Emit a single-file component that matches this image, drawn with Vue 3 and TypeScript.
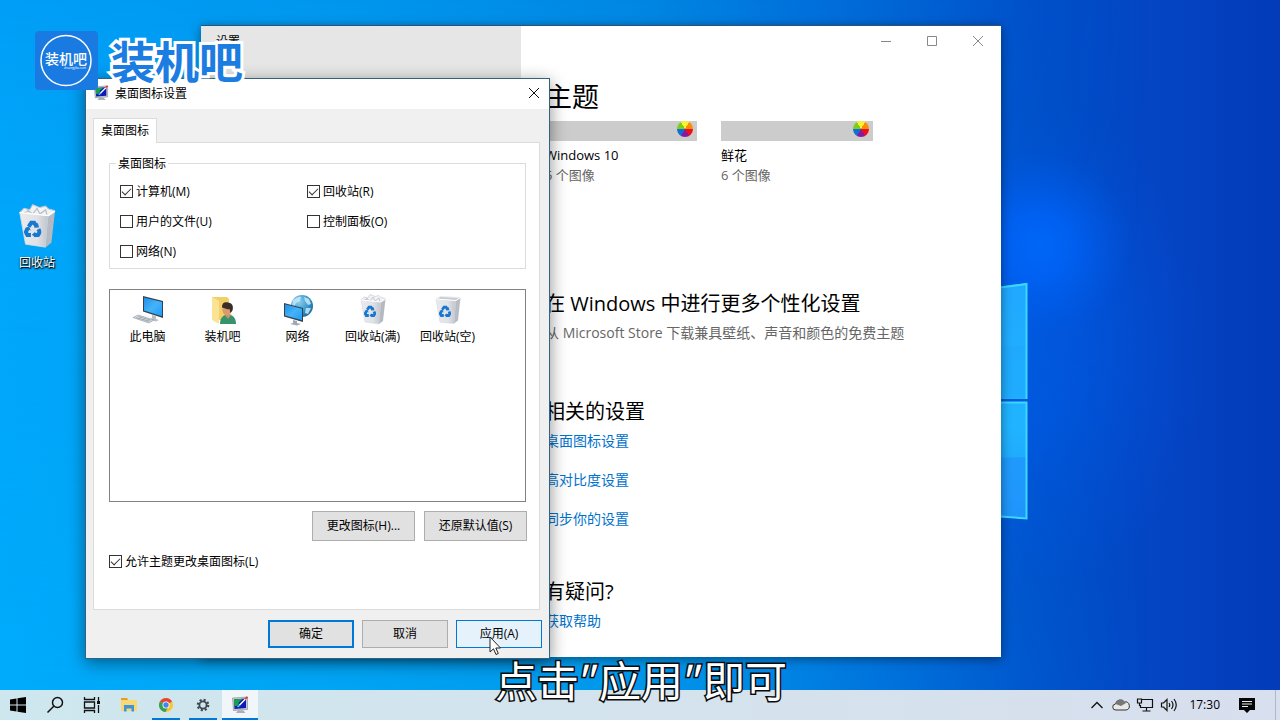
<script setup lang="ts">
import { ref } from 'vue'

interface Choice { label: string; checked: boolean }
interface DesktopIcon { label: string; kind: 'pc' | 'user' | 'net' | 'full' | 'empty' }

const choices = ref<Choice[]>([
  { label: '计算机(M)', checked: true },
  { label: '回收站(R)', checked: true },
  { label: '用户的文件(U)', checked: false },
  { label: '控制面板(O)', checked: false },
  { label: '网络(N)', checked: false },
])
const allowThemes = ref(true)

const icons: DesktopIcon[] = [
  { label: '此电脑', kind: 'pc' },
  { label: '装机吧', kind: 'user' },
  { label: '网络', kind: 'net' },
  { label: '回收站(满)', kind: 'full' },
  { label: '回收站(空)', kind: 'empty' },
]
const themes = [
  { name: 'Windows 10', count: '5 个图像' },
  { name: '鲜花', count: '6 个图像' },
]
const links = ['桌面图标设置', '高对比度设置', '同步你的设置']
</script>

<template>
  <div class="screen">
    <svg width="0" height="0" class="defs" aria-hidden="true">
      <defs>
        <linearGradient id="scr" x1="0" y1="0" x2="1" y2="1">
          <stop offset="0" stop-color="#1d8fe6" /><stop offset="0.5" stop-color="#45b3fb" /><stop offset="1" stop-color="#1f9bf2" />
        </linearGradient>
        <linearGradient id="bin" x1="0" y1="0" x2="1" y2="0">
          <stop offset="0" stop-color="#e9ebee" /><stop offset="0.6" stop-color="#dfe2e6" /><stop offset="1" stop-color="#c0c5cc" />
        </linearGradient>
        <radialGradient id="globe" cx="0.35" cy="0.3" r="0.8">
          <stop offset="0" stop-color="#8fd0f0" /><stop offset="0.6" stop-color="#3596cc" /><stop offset="1" stop-color="#17628f" />
        </radialGradient>
        <symbol id="recycle" viewBox="0 0 12 12">
          <g fill="none" stroke="#1878cf" stroke-width="2.8">
            <path d="M3.2 4.2 5 1.6h2l1.6 2.3" /><path d="M10 6l.9 2-1.2 2H7" /><path d="M4.8 10H2.3L1.2 8l1.3-2.4" />
          </g>
          <path d="M6.9 5.1 10.4 4.8 9.6 1.6zM7.8 7.8v4L5.4 9.9zM.6 5.4 3.4 4l1.3 3z" fill="#1878cf" />
        </symbol>
        <symbol id="bin-empty" viewBox="0 0 32 32">
          <path d="M4 5 8.500 2.500 28 3.500 24 7z" fill="#c9cdd2" stroke="#eceef0" />
          <path d="M4 5 24 6.500 22 29.500 8 28z" fill="url(#bin)" stroke="#d0d4d8" stroke-width="0.6" />
          <path d="M24 6.500 28.500 3.500 26 26.500 22 29.500z" fill="#b8bdc5" />
          <path d="M4 5l20 1.500 4.500-3" fill="none" stroke="#fff" />
          <use href="#recycle" x="7" y="11" width="12" height="13" />
        </symbol>
        <symbol id="bin-full" viewBox="0 0 32 32">
          <path d="M4 6 7 3l4 1 2-3.500 5 2 4-1 2 2 4 1-1 3-9 3z" fill="#f1f3f5" stroke="#c5cad0" stroke-width="0.7" />
          <path d="M9 4l4 3 3-4 2 4 4-3 1 4M7 6l4-1" fill="none" stroke="#b6bcc4" stroke-width="0.8" />
          <path d="M4 6 24 8 22 30 8 28z" fill="url(#bin)" stroke="#d5d9dd" stroke-width="0.6" />
          <path d="M24 8 28.500 5 26 27 22 30z" fill="#b5bac2" />
          <path d="M4 6l20 2 4.500-3" fill="none" stroke="#fff" />
          <use href="#recycle" x="7" y="11" width="12" height="13" />
        </symbol>
        <symbol id="pc" viewBox="0 0 32 32">
          <path d="M11 2 31 7v17L11 17.500z" fill="#33404c" />
          <path d="M12 3.500 30 8v14.200L12 16.500z" fill="url(#scr)" />
          <path d="M20 21v3l-3 1.500 7 2 3-1.500-3-1v-3z" fill="#b9c0c6" />
          <path d="M1 23.500 6 21l16 5-5 3z" fill="#d5dade" stroke="#8d969e" stroke-width="0.6" />
          <path d="M4 23.500l13 4M6 22.300l13 4.200M6 25l4-2M10 26.200l4-2M14 27.400l4-2" stroke="#98a1aa" stroke-width="0.7" />
        </symbol>
        <symbol id="user" viewBox="0 0 32 32">
          <path d="M5 3h15l2 2v21H5z" fill="#f3cf68" /><path d="M5 3l7 4v23l-7-4z" fill="#fbe396" />
          <path d="M13 30c0-7 4-9.500 8-9.500s8 2.500 8 9.500z" fill="#36936b" />
          <path d="M17.500 20.500 21 25l3.500-4.500z" fill="#cf8f5e" />
          <ellipse cx="20" cy="15.500" rx="4.600" ry="6" fill="#d99b6b" />
          <path d="M15 13.500c0-5 3-5.500 6-5 3.500.3 6 3 4.500 8l-2 2.500-1-4c-3 1-4-1-7.500-1.500z" fill="#3b2e28" />
        </symbol>
        <symbol id="net" viewBox="0 0 32 32">
          <circle cx="20" cy="12" r="11" fill="url(#globe)" />
          <path d="M11 6c3-1 4-4 8-3l-1 4-4 2-2 4-2-1zM22 3l5 2 2 5-3 1-3-4zM24 14l5 0-3 6-3-1z" fill="#c8e7f3" opacity="0.85" />
          <path d="M2 9 21 14v14L2 22.500z" fill="#33404c" /><path d="M3 10.300 20 14.800v11.500L3 21.500z" fill="url(#scr)" />
          <path d="M11 26v3l-3 1 7 1.500 4-1.500-4-1v-2z" fill="#9fa9b2" />
        </symbol>
        <symbol id="personal" viewBox="0 0 18 18">
          <path d="M1.500 2 16.500 1v12.500L2.500 14.500z" fill="#c4cac8" stroke="#778" stroke-width="0.5" /><path d="M3 3.500 15 2.500v9.500L3.500 13z" fill="#1018b8" />
          <path d="M3 3.500 12 2.700 8 6 7 9.500 3.300 10.500z" fill="#17a34a" /><path d="M8 9.500 15.500 2" stroke="#fff" stroke-width="1.400" /><path d="M6.500 11 9 9" stroke="#54c8f0" stroke-width="1.600" /><path d="M14 3l2.500-2" stroke="#e03a30" stroke-width="1.800" />
          <path d="M7 14.300h5l2.500 2.700H5z" fill="#a9b0b2" />
        </symbol>
      </defs>
    </svg>

    <main class="desktop">
      <svg class="wallpaper" viewBox="0 0 1280 690" preserveAspectRatio="xMaxYMid slice" aria-hidden="true">
        <defs>
          <linearGradient id="sky" x1="0" y1="0" x2="1" y2="0">
            <stop offset="0" stop-color="#00a7fb" /><stop offset="0.28" stop-color="#009df0" /><stop offset="0.5" stop-color="#008be3" />
            <stop offset="0.64" stop-color="#006fda" /><stop offset="0.8" stop-color="#0050ca" /><stop offset="0.9" stop-color="#0445c4" /><stop offset="1" stop-color="#033bb9" />
          </linearGradient>
          <linearGradient id="low" x1="0" y1="0" x2="0" y2="1">
            <stop offset="0" stop-color="#0070e0" stop-opacity="0.16" /><stop offset="0.5" stop-color="#00b4ff" stop-opacity="0" /><stop offset="1" stop-color="#00b8ff" stop-opacity="0.25" />
          </linearGradient>
          <linearGradient id="lowmask" x1="0" y1="0" x2="1" y2="0"><stop offset="0.6" stop-color="#fff" /><stop offset="0.9" stop-color="#000" /></linearGradient>
          <mask id="leftside"><rect width="1280" height="690" fill="url(#lowmask)" /></mask>
          <radialGradient id="glow"><stop offset="0" stop-color="#006bff" /><stop offset="0.35" stop-color="#0065fc" stop-opacity="0.85" /><stop offset="1" stop-color="#005bea" stop-opacity="0" /></radialGradient>
          <linearGradient id="pane" x1="0" y1="0" x2="0" y2="1"><stop offset="0" stop-color="#20a8ff" /><stop offset="0.6" stop-color="#20b4ff" /><stop offset="1" stop-color="#1e9dfa" /></linearGradient>
        </defs>
        <rect width="1280" height="690" fill="url(#sky)" />
        <rect width="1280" height="690" fill="url(#low)" mask="url(#leftside)" />
        <ellipse cx="1010" cy="350" rx="200" ry="250" fill="url(#glow)" opacity="0.4" />
        <circle cx="1040" cy="245" r="95" fill="url(#glow)" opacity="0.8" />
        <path d="M900 300 1027 283v116H900zM900 402h127v117L900 510z" fill="url(#pane)" />
        <path d="M900 348 1027 346v52H900z" fill="#1f9dfa" opacity="0.2" />
        <path d="M900 350 1027 343v62l-127-9z" fill="none" />
        <path d="M1000 345.500 1027 343.500v0z" fill="none" />
        <path d="M900 461 1027 457v62l-127-9z" fill="#1f8ffb" opacity="0.6" />
        <path d="M1000 287.500 1026.500 284v115M1000 402.500h26.500V518.500l-26.500-2" fill="none" stroke="#3bd8ff" stroke-width="2" />
      </svg>

      <button class="shortcut" type="button">
        <svg width="46" height="46" aria-hidden="true"><use href="#bin-full" /></svg>
        <span>回收站</span>
      </button>

      <section class="settings" aria-label="设置">
        <aside class="side">设置</aside>
        <div class="content">
          <div class="caption">
            <button type="button" aria-label="最小化"><svg width="12" height="12"><path d="M1 6.500h10" /></svg></button>
            <button type="button" aria-label="最大化"><svg width="12" height="12"><path d="M1.500 1.500h9v9h-9z" /></svg></button>
            <button type="button" aria-label="关闭"><svg width="12" height="12"><path d="M1 1l10 10M11 1 1 11" /></svg></button>
          </div>
          <div class="page">
            <h1>主题</h1>
            <div class="themes">
              <div v-for="t in themes" :key="t.name" class="theme">
                <div class="thumb"><i class="wheel"></i></div>
                <div class="name">{{ t.name }}</div>
                <div class="count">{{ t.count }}</div>
              </div>
            </div>
            <h2 class="more">在 Windows 中进行更多个性化设置</h2>
            <p>从 Microsoft Store 下载兼具壁纸、声音和颜色的免费主题</p>
            <h2 class="related">相关的设置</h2>
            <nav><a v-for="l in links" :key="l" href="#">{{ l }}</a></nav>
            <h2 class="ask">有疑问?</h2>
            <nav><a href="#">获取帮助</a></nav>
          </div>
        </div>
      </section>

      <section class="dialog" role="dialog" aria-label="桌面图标设置">
        <header class="titlebar">
          <svg width="16" height="16" aria-hidden="true"><use href="#personal" /></svg>
          <span>桌面图标设置</span>
          <button type="button" aria-label="关闭"><svg width="12" height="12"><path d="M1 1l10 10M11 1 1 11" /></svg></button>
        </header>
        <div class="body">
          <button class="tab" type="button">桌面图标</button>
          <div class="panel">
            <fieldset>
              <legend>桌面图标</legend>
              <div class="checks">
                <label v-for="c in choices" :key="c.label"><input v-model="c.checked" type="checkbox" /><span>{{ c.label }}</span></label>
              </div>
            </fieldset>
            <div class="list">
              <div v-for="i in icons" :key="i.label" class="item">
                <svg width="32" height="32" aria-hidden="true">
                  <use :href="i.kind === 'full' ? '#bin-full' : i.kind === 'empty' ? '#bin-empty' : '#' + i.kind" />
                </svg>
                <span>{{ i.label }}</span>
              </div>
            </div>
            <div class="actions">
              <button class="btn wide" type="button">更改图标(H)...</button>
              <button class="btn wide" type="button">还原默认值(S)</button>
            </div>
            <label class="allow"><input v-model="allowThemes" type="checkbox" /><span>允许主题更改桌面图标(L)</span></label>
          </div>
          <footer>
            <button class="btn primary" type="button">确定</button>
            <button class="btn" type="button">取消</button>
            <button class="btn hover" type="button">应用(A)</button>
          </footer>
        </div>
      </section>
    </main>

    <footer class="taskbar">
      <div class="apps">
        <button type="button" aria-label="开始"><svg width="18" height="18"><path d="M1 3.500 7.500 2.500v6H1zM8.500 2.300 17 1v7.500H8.500zM1 9.500h6.500v6L1 14.600zM8.500 9.500H17V17l-8.500-1.200z" fill="#000" /></svg></button>
        <button type="button" aria-label="搜索"><svg width="18" height="18"><path d="M16.500 6.500a5 5 0 1 1-10 0 5 5 0 0 1 10 0zM8 10 1.500 16.500" fill="none" stroke="#111" stroke-width="1.500" /></svg></button>
        <button type="button" aria-label="任务视图"><svg width="18" height="18"><path d="M1.500 1v2.500h10V1M1.500 6h10v6h-10zM1.500 17v-2.500h10V17M15.500 1v4M15.500 9v8" fill="none" stroke="#111" stroke-width="1.300" /><path d="M14 5h3v3h-3z" fill="#111" /></svg></button>
        <button type="button" aria-label="文件资源管理器"><svg width="18" height="18"><path d="M1 2h6l2 2h8v11H1z" fill="#f8d775" /><path d="M1 2h6l1 2H1z" fill="#e0a020" /><path d="M4 15.500V9h10v6.500h-2.500v-3h-5v3z" fill="#3c94d8" /></svg></button>
        <button class="open" type="button" aria-label="Chrome"><svg width="18" height="18"><circle cx="9" cy="9" r="7" fill="#fbc52d" /><path d="M9 9 2.900 5.500A7 7 0 0 1 15.100 5.500z" fill="#e2463a" /><path d="M9 9 2.900 5.500A7 7 0 0 0 8.500 16l3-5.500z" fill="#34a058" /><circle cx="9" cy="9" r="3.500" fill="#fff" /><circle cx="9" cy="9" r="2.700" fill="#4285f4" /></svg></button>
        <button class="open" type="button" aria-label="设置"><svg width="18" height="18"><circle cx="9" cy="9" r="5.200" fill="none" stroke="#3f464d" stroke-width="2.200" stroke-dasharray="2.040" /><circle cx="9" cy="9" r="3.600" fill="none" stroke="#3f464d" stroke-width="1.800" /></svg></button>
        <button class="open active" type="button" aria-label="个性化"><svg width="18" height="18"><use href="#personal" /></svg></button>
      </div>
      <div class="tray">
        <button type="button" aria-label="显示隐藏的图标"><svg width="18" height="18"><path d="M3.500 12 9 6.500l5.500 5.500" fill="none" stroke="#111" stroke-width="1.300" /></svg></button>
        <button type="button" aria-label="OneDrive"><svg width="18" height="18"><path d="M4 14a3 3 0 0 1-.5-6A5 5 0 0 1 12.500 6a4 4 0 0 1 1.500 8z" fill="#e8e8e6" stroke="#333" /><path d="M3.500 8A5 5 0 0 1 12.500 6l1.500 1-5 3-4-1.500z" fill="#777" /></svg></button>
        <button type="button" aria-label="网络"><svg width="18" height="18"><path d="M5.500 3.500h11v8H4.500V9M10.500 11.500v3M6.500 15h8M1.500 3h4v4h-4zM3.500 7v3" fill="none" stroke="#111" stroke-width="1.200" /></svg></button>
        <button type="button" aria-label="音量"><svg width="18" height="18"><path d="M1.500 7h2L7 3.500v11L3.500 11h-2zM9 7q1.500 2 0 4M11.500 5q3 4 0 8M14 3q4.500 6 0 12" fill="none" stroke="#111" stroke-width="1.200" /></svg></button>
        <time>17:30</time>
        <button class="notice" type="button" aria-label="通知"><svg width="18" height="18"><path d="M1 2h16v12h-5l-3 3-3-3H1z" fill="#050505" /><path d="M4 5.500h10M4 8h10M4 10.500h6" stroke="#e8edf5" stroke-width="1.200" /></svg></button>
      </div>
    </footer>

    <div class="brand">
      <svg width="63" height="59" role="img" aria-label="装机吧">
        <rect width="63" height="59" rx="4" fill="#197ae2" />
        <circle cx="31" cy="29.500" r="25" fill="none" stroke="#fff" stroke-width="1.500" />
        <text x="31" y="33" text-anchor="middle" class="mark">装机吧</text>
        <text x="51" y="38" text-anchor="end" class="url">zhuangjiba.com</text>
      </svg>
      <strong>装机吧</strong>
    </div>

    <div class="subtitle">点击<i>"</i>应用<i>"</i>即可</div>

    <svg class="cursor" width="14" height="20" aria-hidden="true"><path d="M1 1v15l3.500-3.200 2.500 5.700 2.300-1-2.500-5.500H11.500z" fill="#fff" stroke="#222" /></svg>
  </div>
</template>

<style>
body { margin: 0; }
</style>

<style scoped>
* { box-sizing: border-box; }
.screen {
  position: relative;
  display: flex;
  flex-direction: column;
  min-height: 100vh;
  overflow: hidden;
  font-family: "Open Sans", "Noto Sans CJK SC", sans-serif;
  font-size: 12px;
  color: #000;
}
button { font: inherit; color: inherit; padding: 0; border: 0; background: none; }
h1, h2, p { margin: 0; font-weight: 400; }
svg { display: block; }
.defs { position: absolute; }
.desktop { position: relative; flex: 1; min-height: 690px; }
.wallpaper { position: absolute; inset: 0; width: 100%; height: 100%; }

.shortcut {
  position: absolute; left: 1px; top: 204px; width: 72px;
  display: flex; flex-direction: column; align-items: center; gap: 4px;
  color: #fff; line-height: 18px; text-shadow: 0 1px 2px #000, 1px 1px 1px #000;
}

.settings {
  position: absolute; left: 201px; top: 25px; width: 800px; min-height: 632px;
  display: flex; background: #fff; border-top: 1px solid #2d5278;
  box-shadow: 0 2px 10px rgba(0, 0, 0, 0.45);
}
.side { flex: 0 0 320px; padding: 6px 15px; background: #e6e6e6; line-height: 20px; }
.content { flex: 1; min-width: 0; }
.caption { display: flex; justify-content: flex-end; height: 30px; }
.caption button { width: 46px; display: flex; align-items: center; justify-content: center; }
.caption path { fill: none; stroke: #888; }
.page { padding: 23px 24px 26px; font-size: 14px; line-height: 20px; }
h1 { font-size: 27px; line-height: 36px; }
.themes { display: flex; gap: 24px; margin-top: 6px; }
.theme { width: 152px; }
.thumb { display: flex; justify-content: flex-end; height: 20px; padding: 0 4px; background: #ccc; }
.wheel {
  width: 16px; height: 16px; border-radius: 50%;
  background: conic-gradient(from -30deg, #fdf135 60deg, #ff8c00 60deg 120deg, #e81123 120deg 180deg, #8b1a9b 180deg 240deg, #0f6fd6 240deg 300deg, #7fcc1d 300deg);
}
.name { margin-top: 4px; font-size: 13px; }
.count { font-size: 13px; color: #666; }
h2 { font-size: 20px; line-height: 28px; }
.more { margin-top: 105px; }
.page p { margin-top: 5px; color: #666; white-space: nowrap; }
.related { margin-top: 55px; }
.ask { margin-top: 49px; }
nav { display: flex; flex-direction: column; align-items: flex-start; gap: 19px; margin-top: 5px; }
nav a { color: #0072cc; text-decoration: none; }

.dialog {
  position: absolute; left: 85px; top: 78px; width: 465px;
  background: #f0f0f0; border: 1px solid #34617f;
  box-shadow: 0 4px 16px rgba(0, 0, 0, 0.45);
}
.titlebar { display: flex; align-items: center; gap: 6px; height: 30px; padding: 0 0 2px 7px; background: #fff; }
.titlebar span { flex: 1; }
.titlebar button { width: 31px; height: 28px; display: flex; align-items: center; justify-content: center; }
.titlebar path { stroke: #111; }
.body { padding: 9px 7px 10px; }
.tab {
  position: relative; z-index: 1; display: block; width: 64px; height: 25px; margin-bottom: -1px; padding-bottom: 3px;
  background: #fff; border: 1px solid #dcdcdc; border-bottom: 0;
}
.panel { min-height: 468px; margin-right: 2px; padding: 13px 12px 0 15px; background: #fff; border: 1px solid #dcdcdc; }
fieldset { margin: 0 1px 0 0; padding: 5px 10px 2px; border: 1px solid #dcdcdc; min-width: 0; }
legend { margin-left: -4px; padding: 1px 2px 0; line-height: 14px; }
.checks { display: grid; grid-template-columns: 187px 1fr; grid-auto-rows: 30px; align-items: center; }
label { display: flex; align-items: center; gap: 3px; line-height: 18px; }
label span { padding-top: 2px; }
input {
  appearance: none; flex: none; width: 13px; height: 13px; margin: 0;
  border: 1px solid #333; background: #fff; display: grid; place-items: center;
}
input:checked::before {
  content: ""; width: 8px; height: 4px; margin-bottom: 2px;
  border: solid #333; border-width: 0 0 1px 1px; transform: rotate(-45deg);
}
.list { display: flex; align-items: flex-start; min-height: 213px; margin: 20px 1px 0 0; padding-top: 4px; border: 1px solid #828282; }
.item { width: 75px; display: flex; flex-direction: column; align-items: center; gap: 3px; line-height: 16px; white-space: nowrap; }
.actions { display: flex; justify-content: flex-end; gap: 9px; margin-top: 9px; }
.btn { width: 86px; height: 28px; padding-bottom: 2px; background: #e1e1e1; border: 1px solid #adadad; }
.btn.wide { width: 103px; height: 30px; }
.btn.primary { border: 2px solid #0078d7; }
.btn.hover { background: #e5f1fb; border-color: #0078d7; }
.allow { margin-top: 10px; }
.body footer { display: flex; justify-content: flex-end; gap: 8px; margin-top: 10px; }

.taskbar {
  display: flex; justify-content: space-between; height: 30px;
  background: linear-gradient(90deg, #cee7ee, #d4e3ed 50%, #d8dfee);
}
.apps { display: flex; gap: 1px; }
.apps button { position: relative; width: 36px; display: flex; align-items: center; justify-content: center; }
.open::after { content: ""; position: absolute; left: 4px; right: 4px; bottom: 0; height: 2px; background: #0078d7; }
.active { background: #f0f6f9; }
.active::after { left: 0; right: 0; }
.tray { display: flex; align-items: center; gap: 6px; margin-right: 4px; padding-right: 19px; border-right: 1px solid #aebacb; }
.tray time { margin: 0 12px 0 5px; padding-bottom: 2px; }

.brand { position: absolute; left: 35px; top: 31px; display: flex; align-items: center; gap: 13px; }
.mark { font: 500 14px "Noto Sans CJK SC", sans-serif; fill: #fff; }
.url { font-size: 3px; fill: #fff; }
.brand strong {
  font: 700 44px/59px "Noto Sans CJK SC", sans-serif; color: #1b7ce2;
  -webkit-text-stroke: 6px #fff; paint-order: stroke fill;
}
.subtitle {
  position: absolute; left: 0; right: 0; top: 652px; padding-left: 2px; text-align: center; pointer-events: none;
  font: 400 42px/54px "Noto Sans CJK SC", sans-serif; color: #fff;
  -webkit-text-stroke: 3px #0a0a0a; paint-order: stroke fill;
}
.subtitle i { margin: 0 6px 0 -6px; }
.cursor { position: absolute; left: 489px; top: 636px; }
</style>
